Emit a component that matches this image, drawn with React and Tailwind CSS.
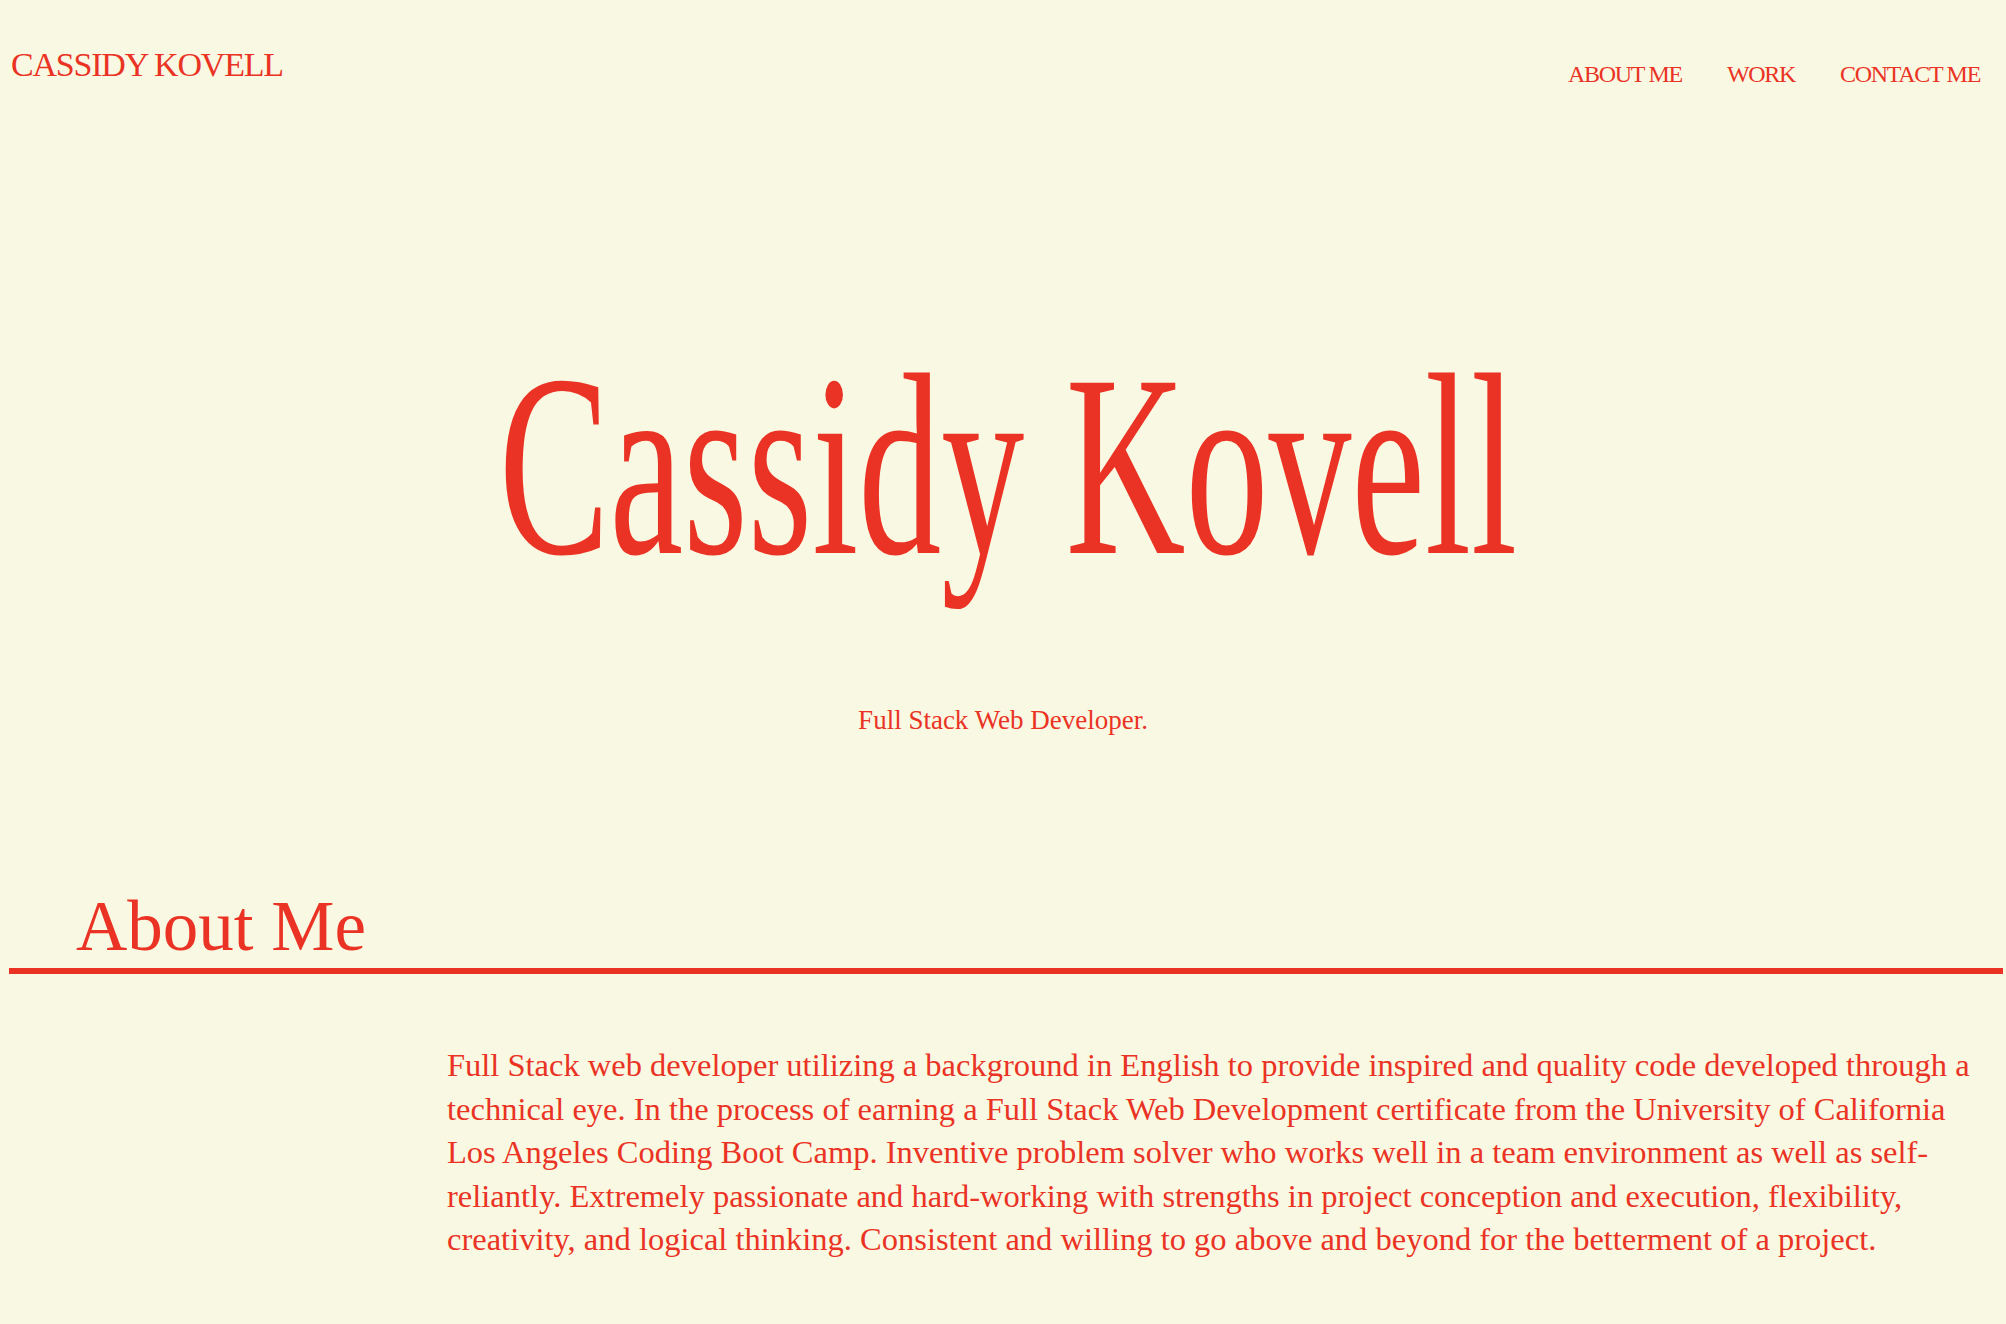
import React from 'react';

const navLinks = ['ABOUT ME', 'WORK', 'CONTACT ME'];

const aboutLines = [
  'Full Stack web developer utilizing a background in English to provide inspired and quality code developed through a',
  'technical eye. In the process of earning a Full Stack Web Development certificate from the University of California',
  'Los Angeles Coding Boot Camp. Inventive problem solver who works well in a team environment as well as self-',
  'reliantly. Extremely passionate and hard-working with strengths in project conception and execution, flexibility,',
  'creativity, and logical thinking. Consistent and willing to go above and beyond for the betterment of a project.',
];

const App = () => {
  return (
    <div className="min-h-screen bg-[#f9f8e2] text-[#ea3324] font-['Liberation_Serif',serif]">
      {/* top bar */}
      <header className="flex items-start justify-between pt-[48px] pl-[11px] pr-[26px]">
        <a href="#" className="text-[34px] leading-none tracking-[-1.2px]">
          CASSIDY KOVELL
        </a>
        <nav className="mt-[14px] flex gap-[45px]">
          {navLinks.map((name) => (
            <a key={name} href="#" className="text-[24px] leading-none tracking-[-1.3px]">
              {name}
            </a>
          ))}
        </nav>
      </header>

      {/* hero */}
      <section className="mt-[249px] flex flex-col items-center">
        <h1 className="ml-[10px] inline-block origin-center scale-x-[0.638] whitespace-nowrap text-[260px] leading-none">
          Cassidy Kovell
        </h1>
        <p className="mt-[112px] text-[27px] leading-none">Full Stack Web Developer.</p>
      </section>

      {/* about */}
      <section className="mt-[157px] pb-[40px]">
        <h2 className="pl-[76px] text-[71px] leading-none">About Me</h2>
        <div className="mt-[6px] ml-[9px] mr-[3px] h-[6px] bg-[#ea3324]" />
        <p className="mt-[70px] pl-[447px] pr-[26px] text-[32.5px] leading-[43.5px]">
          {aboutLines.map((line) => (
            <span key={line} className="block whitespace-nowrap">
              {line}
            </span>
          ))}
        </p>
      </section>
    </div>
  );
};

export default App;
